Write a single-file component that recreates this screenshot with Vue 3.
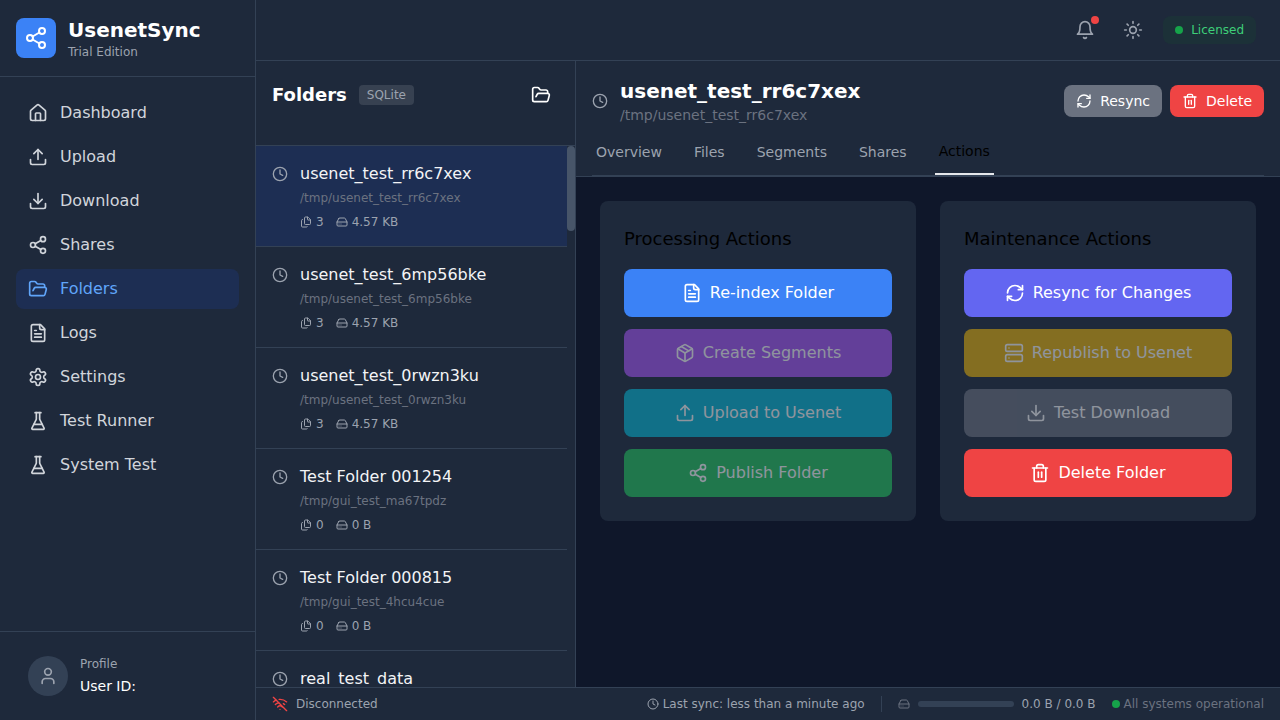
<script setup>
// Lucide icon bodies, drawn through v-html on a shared <svg> shell
const p = (...ds) => ds.map((d) => `<path d="${d}"/>`).join('')
const c = (x, y, r) => `<circle cx="${x}" cy="${y}" r="${r}"/>`
const icons = {
  home: p('M15 21v-8a1 1 0 0 0-1-1h-4a1 1 0 0 0-1 1v8', 'M3 10a2 2 0 0 1 .709-1.528l7-5.999a2 2 0 0 1 2.582 0l7 5.999A2 2 0 0 1 21 10v9a2 2 0 0 1-2 2H5a2 2 0 0 1-2-2z'),
  upload: p('M21 15v4a2 2 0 0 1-2 2H5a2 2 0 0 1-2-2v-4', 'M17 8l-5-5-5 5', 'M12 3v12'),
  download: p('M21 15v4a2 2 0 0 1-2 2H5a2 2 0 0 1-2-2v-4', 'M7 10l5 5 5-5', 'M12 15V3'),
  share: c(18, 5, 3) + c(6, 12, 3) + c(18, 19, 3) + p('M8.59 13.51l6.83 3.98', 'M15.41 6.51l-6.82 3.98'),
  folder: p('m6 14 1.5-2.9A2 2 0 0 1 9.24 10H20a2 2 0 0 1 1.94 2.5l-1.54 6a2 2 0 0 1-1.94 1.5H4a2 2 0 0 1-2-2V5a2 2 0 0 1 2-2h3.9a2 2 0 0 1 1.69.9l.81 1.2a2 2 0 0 0 1.67.9H18a2 2 0 0 1 2 2v2'),
  file: p('M15 2H6a2 2 0 0 0-2 2v16a2 2 0 0 0 2 2h12a2 2 0 0 0 2-2V7Z', 'M14 2v4a2 2 0 0 0 2 2h4', 'M10 9H8', 'M16 13H8', 'M16 17H8'),
  gear: p('M12.22 2h-.44a2 2 0 0 0-2 2v.18a2 2 0 0 1-1 1.73l-.43.25a2 2 0 0 1-2 0l-.15-.08a2 2 0 0 0-2.73.73l-.22.38a2 2 0 0 0 .73 2.73l.15.1a2 2 0 0 1 1 1.72v.51a2 2 0 0 1-1 1.74l-.15.09a2 2 0 0 0-.73 2.73l.22.38a2 2 0 0 0 2.73.73l.15-.08a2 2 0 0 1 2 0l.43.25a2 2 0 0 1 1 1.73V20a2 2 0 0 0 2 2h.44a2 2 0 0 0 2-2v-.18a2 2 0 0 1 1-1.73l.43-.25a2 2 0 0 1 2 0l.15.08a2 2 0 0 0 2.73-.73l.22-.39a2 2 0 0 0-.73-2.73l-.15-.08a2 2 0 0 1-1-1.74v-.5a2 2 0 0 1 1-1.74l.15-.09a2 2 0 0 0 .73-2.73l-.22-.38a2 2 0 0 0-2.73-.73l-.15.08a2 2 0 0 1-2 0l-.43-.25a2 2 0 0 1-1-1.73V4a2 2 0 0 0-2-2z') + c(12, 12, 3),
  flask: p('M10 2v7.527a2 2 0 0 1-.211.896L4.72 20.55a1 1 0 0 0 .9 1.45h12.76a1 1 0 0 0 .9-1.45l-5.069-10.127A2 2 0 0 1 14 9.527V2', 'M8.5 2h7', 'M7 16h10'),
  clock: c(12, 12, 10) + p('M12 6v6l4 2'),
  files: p('M15 2h-4a2 2 0 0 0-2 2v11a2 2 0 0 0 2 2h8a2 2 0 0 0 2-2V8', 'M16.706 2.706A2.4 2.4 0 0 0 15 2v5a1 1 0 0 0 1 1h5a2.4 2.4 0 0 0-.706-1.706z', 'M5 7a2 2 0 0 0-2 2v11a2 2 0 0 0 2 2h8a2 2 0 0 0 1.732-1'),
  drive: p('M22 12H2', 'M5.45 5.11 2 12v6a2 2 0 0 0 2 2h16a2 2 0 0 0 2-2v-6l-3.45-6.89A2 2 0 0 0 16.76 4H7.24a2 2 0 0 0-1.79 1.11z', 'M6 16h.01', 'M10 16h.01'),
  refresh: p('M3 12a9 9 0 0 1 9-9 9.75 9.75 0 0 1 6.74 2.74L21 8', 'M21 3v5h-5', 'M21 12a9 9 0 0 1-9 9 9.75 9.75 0 0 1-6.74-2.74L3 16', 'M8 16H3v5'),
  trash: p('M3 6h18', 'M19 6v14c0 1-1 2-2 2H7c-1 0-2-1-2-2V6', 'M8 6V4c0-1 1-2 2-2h4c1 0 2 1 2 2v2', 'M10 11v6', 'M14 11v6'),
  box: p('M11 21.73a2 2 0 0 0 2 0l7-4A2 2 0 0 0 21 16V8a2 2 0 0 0-1-1.73l-7-4a2 2 0 0 0-2 0l-7 4A2 2 0 0 0 3 8v8a2 2 0 0 0 1 1.73z', 'M12 22V12', 'M3.3 7 12 12l8.7-5', 'm7.5 4.27 9 5.15'),
  server: '<rect x="2" y="2" width="20" height="8" rx="2"/><rect x="2" y="14" width="20" height="8" rx="2"/>' + p('M6 6h.01', 'M6 18h.01'),
  bell: p('M6 8a6 6 0 0 1 12 0c0 7 3 9 3 9H3s3-2 3-9', 'M10.3 21a1.94 1.94 0 0 0 3.4 0'),
  sun: c(12, 12, 4) + p('M12 2v2', 'M12 20v2', 'm4.93 4.93 1.41 1.41', 'm17.66 17.66 1.41 1.41', 'M2 12h2', 'M20 12h2', 'm6.34 17.66-1.41 1.41', 'm19.07 4.93-1.41 1.41'),
  user: p('M19 21v-2a4 4 0 0 0-4-4H9a4 4 0 0 0-4 4v2') + c(12, 7, 4),
  wifiOff: p('M12 20h.01', 'M8.5 16.429a5 5 0 0 1 7 0', 'M5 12.859a10 10 0 0 1 5.17-2.69', 'M19 12.859a10 10 0 0 0-2.007-1.523', 'M2 8.82a15 15 0 0 1 4.177-2.643', 'M22 8.82a15 15 0 0 0-11.288-3.764', 'm2 2 20 20'),
}

const navItems = [
  { label: 'Dashboard', icon: 'home' },
  { label: 'Upload', icon: 'upload' },
  { label: 'Download', icon: 'download' },
  { label: 'Shares', icon: 'share' },
  { label: 'Folders', icon: 'folder', active: true },
  { label: 'Logs', icon: 'file' },
  { label: 'Settings', icon: 'gear' },
  { label: 'Test Runner', icon: 'flask' },
  { label: 'System Test', icon: 'flask' },
]

const folders = [
  { name: 'usenet_test_rr6c7xex', path: '/tmp/usenet_test_rr6c7xex', files: 3, size: '4.57 KB', selected: true },
  { name: 'usenet_test_6mp56bke', path: '/tmp/usenet_test_6mp56bke', files: 3, size: '4.57 KB' },
  { name: 'usenet_test_0rwzn3ku', path: '/tmp/usenet_test_0rwzn3ku', files: 3, size: '4.57 KB' },
  { name: 'Test Folder 001254', path: '/tmp/gui_test_ma67tpdz', files: 0, size: '0 B' },
  { name: 'Test Folder 000815', path: '/tmp/gui_test_4hcu4cue', files: 0, size: '0 B' },
  { name: 'real_test_data', path: '/tmp/real_test_data', files: 0, size: '0 B' },
]

const tabs = ['Overview', 'Files', 'Segments', 'Shares', 'Actions']

const actionGroups = [
  {
    title: 'Processing Actions',
    actions: [
      { label: 'Re-index Folder', icon: 'file', color: 'blue' },
      { label: 'Create Segments', icon: 'box', color: 'purple', disabled: true },
      { label: 'Upload to Usenet', icon: 'upload', color: 'cyan', disabled: true },
      { label: 'Publish Folder', icon: 'share', color: 'green', disabled: true },
    ],
  },
  {
    title: 'Maintenance Actions',
    actions: [
      { label: 'Resync for Changes', icon: 'refresh', color: 'indigo' },
      { label: 'Republish to Usenet', icon: 'server', color: 'yellow', disabled: true },
      { label: 'Test Download', icon: 'download', color: 'gray', disabled: true },
      { label: 'Delete Folder', icon: 'trash', color: 'red' },
    ],
  },
]
</script>

<template>
  <div class="app">
    <aside class="sidebar">
      <div class="brand">
        <div class="logo">
          <svg class="icon i24" viewBox="0 0 24 24" v-html="icons.share"></svg>
        </div>
        <div>
          <div class="brand-name">UsenetSync</div>
          <div class="brand-sub">Trial Edition</div>
        </div>
      </div>
      <nav class="nav">
        <a v-for="item in navItems" :key="item.label" class="nav-item" :class="{ active: item.active }">
          <svg class="icon i20" viewBox="0 0 24 24" v-html="icons[item.icon]"></svg>
          <span>{{ item.label }}</span>
        </a>
      </nav>
      <div class="profile">
        <div class="avatar">
          <svg class="icon i20" viewBox="0 0 24 24" v-html="icons.user"></svg>
        </div>
        <div>
          <div class="profile-label">Profile</div>
          <div class="profile-id">User ID:</div>
        </div>
      </div>
    </aside>

    <div class="main">
      <header class="topbar">
        <button class="icon-btn bell">
          <svg class="icon i20" viewBox="0 0 24 24" v-html="icons.bell"></svg>
          <span class="bell-dot"></span>
        </button>
        <button class="icon-btn">
          <svg class="icon i20" viewBox="0 0 24 24" v-html="icons.sun"></svg>
        </button>
        <div class="license"><span class="license-dot"></span>Licensed</div>
      </header>

      <div class="workspace">
        <section class="folders">
          <div class="folders-head">
            <h2>Folders</h2>
            <span class="badge">SQLite</span>
            <button class="icon-btn open-btn">
              <svg class="icon i20" viewBox="0 0 24 24" v-html="icons.folder"></svg>
            </button>
          </div>
          <div class="folder-list">
            <div v-for="f in folders" :key="f.name" class="folder" :class="{ selected: f.selected }">
              <svg class="icon i16 folder-clock" viewBox="0 0 24 24" v-html="icons.clock"></svg>
              <div>
                <div class="folder-name">{{ f.name }}</div>
                <div class="folder-path">{{ f.path }}</div>
                <div class="folder-stats">
                  <span><svg class="icon i12" viewBox="0 0 24 24" v-html="icons.files"></svg>{{ f.files }}</span>
                  <span><svg class="icon i12" viewBox="0 0 24 24" v-html="icons.drive"></svg>{{ f.size }}</span>
                </div>
              </div>
            </div>
            <div class="scroll-thumb"></div>
          </div>
        </section>

        <section class="detail">
          <div class="detail-head">
            <div class="detail-top">
              <svg class="icon i16 detail-clock" viewBox="0 0 24 24" v-html="icons.clock"></svg>
              <div class="detail-text">
                <h1>usenet_test_rr6c7xex</h1>
                <div class="detail-path">/tmp/usenet_test_rr6c7xex</div>
              </div>
              <button class="small-btn gray">
                <svg class="icon i16" viewBox="0 0 24 24" v-html="icons.refresh"></svg>Resync
              </button>
              <button class="small-btn red">
                <svg class="icon i16" viewBox="0 0 24 24" v-html="icons.trash"></svg>Delete
              </button>
            </div>
            <div class="tabs">
              <button v-for="t in tabs" :key="t" class="tab" :class="{ active: t === 'Actions' }">{{ t }}</button>
            </div>
          </div>
          <div class="detail-body">
            <div v-for="g in actionGroups" :key="g.title" class="card">
              <h3>{{ g.title }}</h3>
              <div class="actions">
                <button v-for="a in g.actions" :key="a.label" class="action" :class="[a.color, { off: a.disabled }]">
                  <svg class="icon i20" viewBox="0 0 24 24" v-html="icons[a.icon]"></svg>{{ a.label }}
                </button>
              </div>
            </div>
          </div>
        </section>
      </div>

      <footer class="statusbar">
        <svg class="icon i16 wifi" viewBox="0 0 24 24" v-html="icons.wifiOff"></svg>
        <span class="conn">Disconnected</span>
        <div class="status-right">
          <span class="sync"><svg class="icon i12" viewBox="0 0 24 24" v-html="icons.clock"></svg>Last sync: less than a minute ago</span>
          <span class="sep"></span>
          <span class="storage">
            <svg class="icon i12 dim" viewBox="0 0 24 24" v-html="icons.drive"></svg>
            <span class="bar"></span>
            0.0 B / 0.0 B
          </span>
          <span class="health"><span class="health-dot"></span>All systems operational</span>
        </div>
      </footer>
    </div>
  </div>
</template>

<style>
html, body {
  margin: 0;
  background: #0f172a;
}
</style>

<style scoped>
.app {
  display: flex;
  width: 1280px;
  height: 720px;
  overflow: hidden;
  background: #0f172a;
  font-family: "DejaVu Sans", sans-serif;
  color: #f3f4f6;
}
button {
  font-family: inherit;
  border: none;
  background: none;
  padding: 0;
}
h1, h2, h3 {
  margin: 0;
}

.icon {
  fill: none;
  stroke: currentColor;
  stroke-width: 2;
  stroke-linecap: round;
  stroke-linejoin: round;
  flex: none;
}
.i12 { width: 12px; height: 12px; }
.i16 { width: 16px; height: 16px; }
.i20 { width: 20px; height: 20px; }
.i24 { width: 24px; height: 24px; }

/* sidebar */
.sidebar {
  width: 256px;
  flex: none;
  box-sizing: border-box;
  display: flex;
  flex-direction: column;
  background: #1e293b;
  border-right: 1px solid #334155;
}
.brand {
  display: flex;
  align-items: center;
  gap: 12px;
  height: 77px;
  box-sizing: border-box;
  padding: 0 16px;
  border-bottom: 1px solid #334155;
}
.logo {
  width: 40px;
  height: 40px;
  border-radius: 8px;
  background: #3b82f6;
  color: #fff;
  display: flex;
  align-items: center;
  justify-content: center;
}
.brand-name {
  font-size: 20px;
  line-height: 28px;
  font-weight: 700;
  color: #fff;
}
.brand-sub {
  font-size: 12px;
  line-height: 16px;
  color: #9ca3af;
}
.nav {
  flex: 1;
  padding: 16px;
  display: flex;
  flex-direction: column;
  gap: 4px;
}
.nav-item {
  display: flex;
  align-items: center;
  gap: 12px;
  height: 40px;
  padding: 0 12px;
  border-radius: 8px;
  font-size: 16px;
  line-height: 24px;
  color: #d1d5db;
}
.nav-item.active {
  background: rgba(30, 58, 138, 0.3);
  color: #60a5fa;
}
.profile {
  display: flex;
  align-items: center;
  gap: 12px;
  padding: 24px 28px;
  border-top: 1px solid #334155;
}
.avatar {
  width: 40px;
  height: 40px;
  border-radius: 50%;
  background: #334155;
  color: #9ca3af;
  display: flex;
  align-items: center;
  justify-content: center;
}
.profile-label {
  font-size: 12px;
  line-height: 16px;
  color: #9ca3af;
  margin-bottom: 4px;
}
.profile-id {
  font-size: 14px;
  line-height: 20px;
  font-weight: 500;
  color: #fff;
}

/* main column */
.main {
  flex: 1;
  min-width: 0;
  display: flex;
  flex-direction: column;
}
.topbar {
  height: 61px;
  box-sizing: border-box;
  flex: none;
  display: flex;
  align-items: center;
  justify-content: flex-end;
  gap: 12px;
  padding: 0 24px;
  background: #1e293b;
  border-bottom: 1px solid #334155;
}
.icon-btn {
  display: flex;
  padding: 8px;
  color: #9ca3af;
  border-radius: 8px;
}
.bell {
  position: relative;
}
.bell-dot {
  position: absolute;
  top: 4px;
  right: 4px;
  width: 8px;
  height: 8px;
  border-radius: 50%;
  background: #ef4444;
}
.license {
  display: flex;
  align-items: center;
  gap: 8px;
  height: 28px;
  padding: 0 12px;
  border-radius: 8px;
  background: rgba(20, 83, 45, 0.2);
  font-size: 12px;
  color: #3ecf78;
}
.license-dot {
  width: 8px;
  height: 8px;
  border-radius: 50%;
  background: #16a34a;
}

.workspace {
  flex: 1;
  min-height: 0;
  display: flex;
}

/* folder list */
.folders {
  width: 320px;
  flex: none;
  box-sizing: border-box;
  display: flex;
  flex-direction: column;
  background: #1e293b;
  border-right: 1px solid #334155;
}
.folders-head {
  height: 85px;
  box-sizing: border-box;
  flex: none;
  display: flex;
  align-items: flex-start;
  padding: 16px 16px 0;
  border-bottom: 1px solid #334155;
}
.folders-head h2 {
  font-size: 18px;
  line-height: 36px;
  font-weight: 700;
  color: #fff;
}
.badge {
  margin: 8px 0 0 12px;
  padding: 0 8px;
  height: 20px;
  line-height: 20px;
  border-radius: 4px;
  background: #374151;
  font-size: 12px;
  color: #9ca3af;
}
.open-btn {
  margin-left: auto;
  color: #fff;
}
.folder-list {
  position: relative;
  flex: 1;
  min-height: 0;
  overflow: hidden;
  padding-right: 8px;
}
.folder {
  display: flex;
  gap: 12px;
  height: 101px;
  box-sizing: border-box;
  padding: 16px;
  border-bottom: 1px solid #334155;
}
.folder.selected {
  background: rgba(30, 58, 138, 0.3);
}
.folder-clock {
  margin-top: 4px;
  color: #9ca3af;
}
.folder-name {
  font-size: 16px;
  line-height: 24px;
  color: #f3f4f6;
}
.folder-path {
  margin-top: 4px;
  font-size: 12px;
  line-height: 16px;
  color: #6b7280;
}
.folder-stats {
  margin-top: 8px;
  display: flex;
  gap: 12px;
  font-size: 12px;
  line-height: 16px;
  color: #9ca3af;
}
.folder-stats span {
  display: flex;
  align-items: center;
  gap: 4px;
}
.scroll-thumb {
  position: absolute;
  top: 0;
  right: 0;
  width: 8px;
  height: 85px;
  border-radius: 4px;
  background: #475569;
}

/* detail pane */
.detail {
  flex: 1;
  min-width: 0;
  display: flex;
  flex-direction: column;
}
.detail-head {
  flex: none;
  padding: 16px 16px 0;
  background: #1e293b;
  border-bottom: 1px solid #334155;
}
.detail-top {
  display: flex;
  align-items: center;
  gap: 8px;
}
.detail-clock {
  color: #9ca3af;
  margin-right: 4px;
}
.detail-text {
  flex: 1;
}
.detail-text h1 {
  font-size: 20px;
  line-height: 28px;
  font-weight: 700;
  color: #fff;
}
.detail-path {
  font-size: 14px;
  line-height: 20px;
  color: #6b7280;
}
.small-btn {
  display: flex;
  align-items: center;
  gap: 8px;
  height: 32px;
  padding: 0 12px;
  border-radius: 8px;
  font-size: 14px;
  color: #fff;
}
.small-btn.gray { background: #6b7280; }
.small-btn.red { background: #ef4444; }
.tabs {
  display: flex;
  align-items: center;
  gap: 24px;
  margin-top: 16px;
  border-bottom: 1px solid #334155;
}
.tab {
  padding: 0 4px 12px;
  font-size: 14px;
  line-height: 20px;
  color: #9ca3af;
}
.tab.active {
  color: #000;
  border-bottom: 2px solid #e5e7eb;
}
.detail-body {
  flex: 1;
  min-height: 0;
  padding: 24px;
  display: grid;
  grid-template-columns: 1fr 1fr;
  gap: 24px;
  align-content: start;
}
.card {
  padding: 24px;
  border-radius: 8px;
  background: #1e293b;
}
.card h3 {
  margin-bottom: 16px;
  font-size: 18px;
  line-height: 28px;
  font-weight: 500;
  color: #000;
}
.actions {
  display: flex;
  flex-direction: column;
  gap: 12px;
}
.action {
  display: flex;
  align-items: center;
  justify-content: center;
  gap: 8px;
  height: 48px;
  border-radius: 8px;
  font-size: 16px;
  line-height: 24px;
  color: #fff;
}
.action.off { opacity: 0.5; }
.action.blue { background: #3b82f6; }
.action.purple { background: #a855f7; }
.action.cyan { background: #06b6d4; }
.action.green { background: #22c55e; }
.action.indigo { background: #6366f1; }
.action.yellow { background: #eab308; }
.action.gray { background: #6b7280; }
.action.red { background: #ef4444; }

/* status bar */
.statusbar {
  height: 33px;
  box-sizing: border-box;
  flex: none;
  display: flex;
  align-items: center;
  padding: 0 16px;
  background: #1e293b;
  border-top: 1px solid #334155;
  font-size: 12px;
  color: #9ca3af;
}
.wifi {
  color: #ef4444;
  margin-right: 8px;
}
.status-right {
  margin-left: auto;
  display: flex;
  align-items: center;
  gap: 16px;
}
.sync, .storage, .health {
  display: flex;
  align-items: center;
}
.sync { gap: 4px; }
.sep {
  width: 1px;
  height: 16px;
  background: #334155;
}
.storage { gap: 8px; }
.dim { color: #6b7280; }
.bar {
  width: 96px;
  height: 6px;
  border-radius: 3px;
  background: #334155;
}
.health {
  gap: 4px;
  color: #6b7280;
}
.health-dot {
  width: 8px;
  height: 8px;
  border-radius: 50%;
  background: #16a34a;
}
</style>
